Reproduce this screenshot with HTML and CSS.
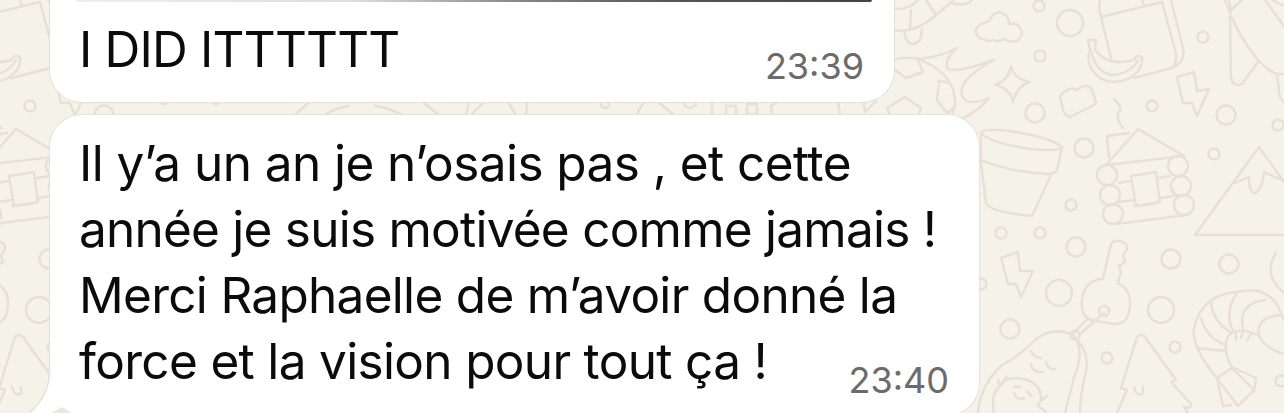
FILE: index.html
```
<!DOCTYPE html>
<html lang="fr">
<head>
<meta charset="utf-8">
<title>Discussion</title>
<link rel="stylesheet" href="styles.css">
</head>
<body>
<div class="chat">
	<svg class="wallpaper" width="1284" height="413" viewBox="0 0 1284 413" aria-hidden="true">
		<g id="doodles">
			<!-- wheel and cloud -->
			<path d="M890 7Q906 13 918 0M892 30Q915 34 936 15L954 0M911 10L910 30M926 0L936 15M904 31L906 39Q908 44 914 44Q920 42 921 37L922 29M952 3Q966 7 972 0"/>
			<path d="M986 40C973 39 972 25 985 23L990 20C993 9 1009 10 1009 24C1020 21 1026 34 1018 40Q1012 44 1005 39Q998 42 993 40Q989 42 986 40Z"/>
			<path d="M1011 66Q1014 79 1030 82Q1017 86 1013 102Q1010 88 995 85Q1009 80 1011 66Z"/>
			<!-- football with flames -->
			<path d="M890 60Q914 55 925 62Q956 76 955 105L952 116M919 59Q940 57 957 48Q943 60 948 69Q957 73 994 60Q957 80 962 96Q967 107 989 98Q978 112 961 119M895 70L906 78L923 72L917 58M950 83L939 81L937 100L947 113L953 108M890 115L887 108L905 97L921 108L919 115"/>
			<path d="M1060 97Q1060 93 1072 88L1076 90L1084 86Q1090 85 1092 90L1096 102Q1096 105 1084 110L1070 117Q1066 117 1063 110Z"/>
			<!-- flower pot -->
			<path d="M981 133Q983 128 1010 131Q1050 137 1062 147Q1058 152 1030 149Q990 143 981 133V160Q1010 172 1047 174Q1055 174 1057 170L1062 147M981 162L986 203Q990 212 1032 216L1051 175"/>
			<!-- box and banana -->
			<path d="M1100 0Q1098 8 1101 17L1112 62M1101 17L1162 2L1175 50Q1178 62 1172 68M1142 0L1144 5M1171 0L1183 48Q1186 62 1172 68L1134 78"/>
			<path d="M1088 40L1096 40L1095 50Q1108 67 1134 60Q1135 54 1142 57Q1144 70 1128 79Q1105 88 1092 70Q1086 60 1090 50ZM1091 50Q1096 75 1115 75Q1132 72 1138 60"/>
			<path d="M1177 77L1194 72L1197 91L1209 89L1197 116L1192 103L1183 103Z"/>
			<path d="M1001 258L1018 252L1020 271L1033 271L1021 297L1016 284L1008 284Z"/>
			<!-- rocket -->
			<path d="M1225 0Q1237 35 1258 60Q1272 74 1278 74L1284 74M1230 17L1231 78Q1234 88 1242 84L1258 62M1229 0L1231 10L1242 0M1265 0L1284 26M1272 0L1284 6M1277 75L1280 98L1284 102"/>
			<!-- log house -->
			<path d="M1114 99Q1124 108 1118 113Q1117 121 1123 128M1106 165L1138 129L1184 156ZM1109 158L1107 136L1129 133M1131 176L1156 172L1160 202L1136 206ZM1119 183L1131 181M1159 178L1170 176M1119 202L1135 200M1161 198L1174 196M1134 206L1154 204M1116 224L1186 215"/>
			<circle cx="1107" cy="175" r="10"/><circle cx="1110" cy="195" r="10"/><circle cx="1113" cy="214" r="10"/>
			<circle cx="1178" cy="166" r="10"/><circle cx="1181" cy="186" r="10"/><circle cx="1184" cy="205" r="10"/>
			<!-- mountain -->
			<path d="M1284 235H1195L1259 147L1284 182M1232 184L1249 177Q1249 193 1255 193Q1262 190 1264 172L1284 181"/>
			<!-- key -->
			<path d="M1103 279L1111 244Q1113 240 1120 241Q1128 243 1127 249L1123 256L1125 262L1119 266L1121 272L1118 283Q1131 290 1130 303Q1130 325 1113 324L1091 320Q1080 316 1082 300Q1085 279 1103 279ZM1104 313L1080 334M1087 319L1073 334"/>
			<circle cx="1104" cy="311" r="5"/><circle cx="1075" cy="335" r="4.500"/>
			<!-- avocados -->
			<path d="M978 413Q980 385 1002 365Q1020 356 1036 339Q1055 326 1072 335Q1090 350 1086 372Q1080 395 1080 413M1076 338Q1084 355 1074 378Q1068 400 1065 413M1031 351Q1034 358 1041 358M1046 362Q1048 370 1055 369M1031 364Q1032 373 1043 372M994 413Q990 395 1000 386Q1005 378 1016 378Q1042 380 1041 400M998 380L1000 386L1007 376M1014 387L1021 387M1027 391L1031 396M1014 393Q1017 401 1024 398M1047 396Q1038 402 1038 406L1046 412"/>
			<!-- tree -->
			<path d="M1117 413L1127 390L1121 388L1137 337Q1141 333 1145 337L1176 380L1171 382L1191 404Q1192 409 1184 407L1188 413M1134 387Q1137 398 1143 393L1143 387"/>
			<!-- shrimp -->
			<path d="M1217 378Q1191 347 1194 328Q1202 294 1237 292Q1270 284 1281 313L1284 320M1232 368Q1222 350 1228 336Q1238 326 1257 335M1197 348L1226 351M1201 318Q1206 338 1226 345M1211 303Q1213 322 1232 333M1237 293Q1224 312 1233 331M1265 300Q1238 303 1243 329M1280 315Q1255 318 1259 336Q1266 349 1284 354M1236 333V340M1243 332L1241 338M1251 334L1247 340M1217 378L1232 368L1254 390L1238 406L1217 378L1223 406L1231 405M1234 368L1256 378L1254 392"/>
			<path d="M1276 253Q1262 275 1284 293"/>
			<!-- dots -->
			<circle cx="1039" cy="6" r="5.500"/><circle cx="1040" cy="56" r="5.500"/><circle cx="1203" cy="37" r="5.500"/>
			<circle cx="1152" cy="106" r="5.500"/><circle cx="1214" cy="154" r="5.500"/><circle cx="1278" cy="125" r="5.500"/>
			<circle cx="1071" cy="205" r="5.500"/><circle cx="1001" cy="233" r="5.500"/><circle cx="1040" cy="233" r="5.500"/>
			<circle cx="981" cy="284" r="5.500"/><circle cx="1107" cy="358" r="5.500"/><circle cx="1175" cy="347" r="5.500"/>
			<circle cx="1281" cy="381" r="5.500"/>
			<circle cx="1035" cy="113" r="9.500"/><circle cx="1084" cy="148" r="9.500"/><circle cx="1226" cy="115" r="9.500"/>
			<circle cx="1076" cy="247" r="9.500"/><circle cx="1010" cy="329" r="9.500"/><circle cx="1171" cy="259" r="9.500"/>
			<circle cx="1229" cy="264" r="9.500"/>
			<circle cx="1070" cy="23" r="13"/><circle cx="1059" cy="293" r="13"/><circle cx="1161" cy="310" r="13"/>
		</g>
		<!-- the pattern repeats every 1122px -->
		<use href="#doodles" x="-1122"/>
		<path d="M295 115L308 103M325 115Q335 108 348 106M375 106Q390 108 402 115M424 103L439 115M466 115L469 102M471 115Q480 105 485 102M508 102L516 115M527 102L526 115M637 115Q640 106 645 102M658 102L674 115M712 102V115M726 115V106H736V115M747 104H757V114H747ZM772 115L771 106L778 102M838 102L840 115M864 102L865 112L876 101"/>
		<circle cx="164" cy="99" r="5"/><circle cx="216" cy="99" r="5"/><circle cx="605" cy="104" r="4"/><circle cx="690" cy="102" r="6"/>
	</svg>
	<div class="message first">
		<div class="photo"></div>
		<p class="text"><span class="shout">I DID ITTTTTT</span></p>
		<time class="time">23:39</time>
	</div>
	<div class="message second">
		<p class="text">
			<span class="l1">Il y’a un an je n’osais pas , et cette</span>
			<span class="l2">année je suis motivée comme jamais !</span>
			<span class="l3">Merci Raphaelle de m’avoir donné la</span>
			<span class="l4">force et la vision pour tout ça !</span>
		</p>
		<time class="time">23:40</time>
		<svg class="tail" width="50" height="48" viewBox="0 0 50 48" aria-hidden="true">
			<path class="tail-fill" d="M21 0V8Q20 32 0 48H50V0Z"/>
			<path class="tail-edge" d="M20.500 0V8Q19.500 32 0 48"/>
			<path class="tail-gap" d="M22 48L33 42L43 48Z"/>
		</svg>
	</div>
</div>
</body>
</html>
```
FILE: styles.css
```
body {
	margin: 0;
	background: #f5f2e9;
	font-family: Inter, "Liberation Sans", sans-serif;
}

.chat {
	position: relative;
	display: flex;
	flex-direction: column;
	align-items: flex-start;
	gap: 13px;
	box-sizing: border-box;
	height: 413px;
	padding-left: 50px;
	overflow: hidden;
}

.wallpaper {
	position: absolute;
	top: 0;
	left: 0;
	fill: none;
	stroke: #e9dfd4;
	stroke-width: 2.4;
	stroke-linecap: round;
	stroke-linejoin: round;
}

.message {
	position: relative;
	display: flex;
	flex-shrink: 0;
	justify-content: space-between;
	align-items: flex-end;
	box-sizing: border-box;
	padding: 0 30px 21px 29px;
	background: #fff;
	box-shadow: 0 0 1px 1px #e6e2da;
}

.first {
	width: 844px;
	height: 102px;
	border-radius: 0 0 32px 32px;
}

.second {
	width: 929px;
	height: 300px;
	border-radius: 32px 32px 32px 0;
}

/* bottom edge of the photo above the caption */
.photo {
	position: absolute;
	top: 0;
	left: 26px;
	width: 796px;
	height: 2px;
	border-radius: 0 0 20px 20px;
	background: linear-gradient(90deg, #eee, #ddd 35%, #888 55%, #555 75%, #444);
}

.text {
	margin: 0;
	color: #0b0b0b;
	font-size: 49.500px;
	line-height: 66px;
	white-space: nowrap;
}

.text span {
	display: block;
	width: max-content;
}

.shout {letter-spacing: -0.8px;}
.l1 {letter-spacing: -0.56px;}
.l2 {letter-spacing: -0.76px;}
.l3 {letter-spacing: -0.7px;}
.l4 {letter-spacing: -0.67px;}

.time {
	color: #6b6b6b;
	font-size: 36px;
	line-height: 40px;
}

.first .text {
	margin-bottom: -1px;
}

.first .time {
	margin-bottom: -5px;
}

/* sits in the free end of the last line */
.second .time {
	position: absolute;
	right: 30px;
	bottom: 15px;
}

.tail {
	position: absolute;
	left: -21px;
	bottom: 2px;
}

.tail-fill {fill: #fff;}
.tail-edge {fill: none; stroke: #e6e2da; stroke-width: 1.5;}
.tail-gap {fill: #eee6db;}
```
